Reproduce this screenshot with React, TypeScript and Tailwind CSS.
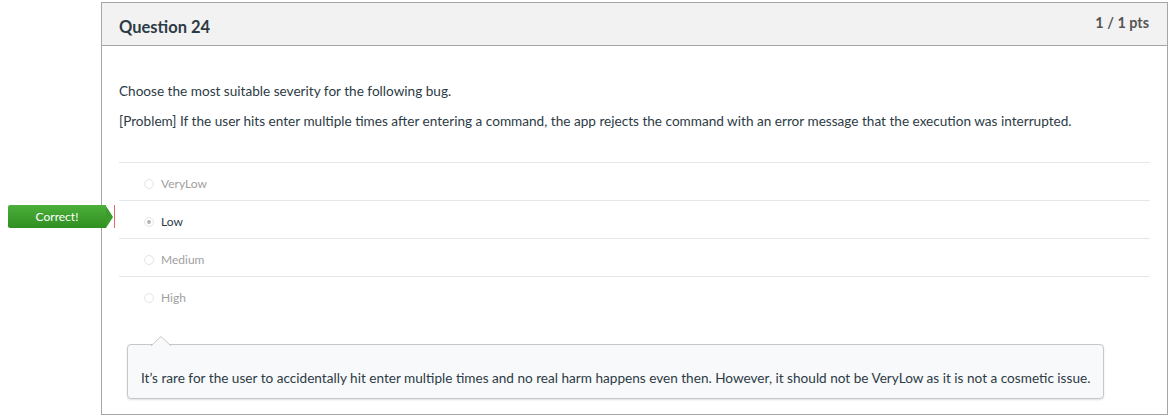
import React from "react";

const answers = [
  { label: "VeryLow", selected: false },
  { label: "Low", selected: true },
  { label: "Medium", selected: false },
  { label: "High", selected: false },
];

function Radio({ selected }: { selected: boolean }) {
  return (
    <span className="relative flex h-[10px] w-[10px] items-center justify-center rounded-full border border-[#e4e4e4] bg-white">
      {selected && <span className="h-[4px] w-[4px] rounded-full bg-[#b5b5b5]" />}
    </span>
  );
}

export default function App() {
  return (
    <div
      className="h-[420px] w-[1172px] bg-white pl-[101px] pt-[2px]"
      style={{ fontFamily: "Lato, 'Open Sans', sans-serif" }}
    >
      <div className="relative h-[413px] w-[1067px] border border-[#a6a6a6] bg-white">
        <div className="flex h-[43px] items-start justify-between border-b border-[#a6a6a6] bg-[#f2f2f2] pl-[17px] pr-[18px]">
          <div className="pt-[13px] text-[16.5px] font-bold leading-[22px] text-[#2d3b45]">Question 24</div>
          <div className="pt-[10px] text-[14.4px] font-bold leading-[20px] text-[#555555]">1 / 1 pts</div>
        </div>
        <div className="px-[17px] pt-[36px] text-[13.6px] text-[#2d3b45]">
          <p className="leading-[19px]">Choose the most suitable severity for the following bug.</p>
          <p className="mt-[11px] leading-[19px]">
            [Problem] If the user hits enter multiple times after entering a command, the app rejects the command with an error message that the execution was interrupted.
          </p>
          <div className="mt-[31px]">
            {answers.map((a) => (
              <div
                key={a.label}
                className="flex h-[38px] items-center gap-[7px] border-t border-[#e6e6e6] pl-[25px] pt-[5px] text-[12px]"
              >
                <Radio selected={a.selected} />
                <span className={a.selected ? "text-[#2d3b45]" : "text-[#a0a0a0]"}>{a.label}</span>
              </div>
            ))}
          </div>
          <div className="relative ml-[8px] mr-[46px] mt-[30px] whitespace-nowrap rounded-[4px] border border-[#c4c8cc] bg-[#f8f9fa] px-[13px] pb-[11px] pt-[25px] text-[13.6px] leading-[17px] text-[#2d3b45] shadow-[0_1px_2px_rgba(0,0,0,0.12)]">
            <svg
              className="absolute left-[23px] top-[-9px]"
              width="20"
              height="10"
              viewBox="0 0 20 10"
            >
              <path d="M0 10 L10 0.5 L20 10" fill="#f8f9fa" stroke="#c4c8cc" strokeWidth="1" />
            </svg>
            It’s rare for the user to accidentally hit enter multiple times and no real harm happens even then. However, it should not be VeryLow as it is not a cosmetic issue.
          </div>
        </div>
        <div className="absolute left-[-94px] top-[202px] flex items-center">
          <div className="flex h-[23px] w-[98px] items-center justify-center rounded-l-[2px] bg-gradient-to-b from-[#4caf3a] to-[#2f8f22] text-[12px] text-white">
            Correct!
          </div>
          <div className="h-0 w-0 border-y-[11.5px] border-l-[7px] border-y-transparent border-l-[#3a9c2c]" />
          <div className="ml-[1px] h-[23px] w-[1px] bg-[#e06a6a]" />
        </div>
      </div>
    </div>
  );
}
